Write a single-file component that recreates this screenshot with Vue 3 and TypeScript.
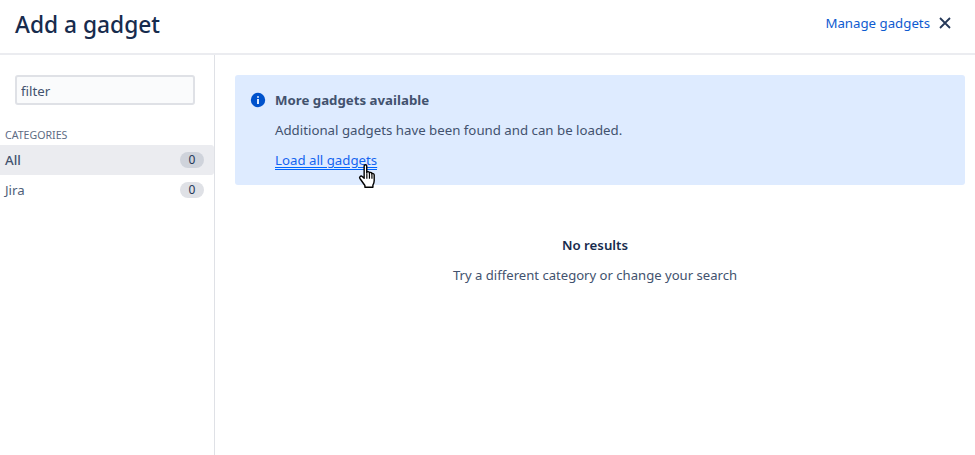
<script setup lang="ts">
const categories = [
  { name: 'All', count: 0, active: true },
  { name: 'Jira', count: 0, active: false },
]
</script>

<template>
  <div class="dialog">
    <header class="head">
      <h1 class="title">Add a gadget</h1>
      <div class="actions">
        <a class="manage">Manage gadgets</a>
        <svg class="close" width="12" height="12" viewBox="0 0 12 12" aria-label="Close">
          <path d="M1 1l10 10M11 1L1 11" stroke="#253858" stroke-width="1.8" fill="none" />
        </svg>
      </div>
    </header>
    <div class="body">
      <aside class="side">
        <div class="filter-wrap">
          <input class="filter" type="text" value="filter" />
        </div>
        <div class="cat-label">CATEGORIES</div>
        <ul class="cats">
          <li v-for="c in categories" :key="c.name" class="cat" :class="{ active: c.active }">
            <span>{{ c.name }}</span>
            <span class="badge">{{ c.count }}</span>
          </li>
        </ul>
      </aside>
      <main class="main">
        <section class="notice">
          <svg class="info" width="16" height="16" viewBox="0 0 16 16">
            <circle cx="8" cy="8" r="7.2" fill="#0052cc" />
            <rect x="7" y="7" width="2" height="5" fill="#deebff" />
            <rect x="7" y="4" width="2" height="2" rx="1" fill="#deebff" />
          </svg>
          <div class="notice-text">
            <div class="notice-title">More gadgets available</div>
            <p class="notice-desc">Additional gadgets have been found and can be loaded.</p>
            <a class="load">Load all gadgets</a>
          </div>
          <svg class="hand" width="19" height="24" viewBox="0.8 0.4 15.6 22.2">
            <path d="M5.5 2.2c0-1.5 2.4-1.5 2.4 0v6.2c.3-1.4 2.4-1.3 2.4.2v.4c.3-1.2 2.3-1.1 2.3.3v.6c.4-1 2.2-.8 2.2.6v5.2c0 2-.6 3-1.2 4.2v2H6.2v-1.6L1.6 13.8c-1-1.5.8-3 2.1-1.9l1.8 1.7z" fill="#fff" stroke="#000" stroke-width="1.3" stroke-linejoin="round" />
            <path d="M8 9v5M10.4 9.5V14M12.7 10.3V14" stroke="#000" stroke-width="1.1" fill="none" />
          </svg>
        </section>
        <div class="empty">
          <div class="empty-title">No results</div>
          <p class="empty-desc">Try a different category or change your search</p>
        </div>
      </main>
    </div>
  </div>
</template>

<style scoped>
.dialog {
  width: 975px;
  height: 455px;
  display: flex;
  flex-direction: column;
  overflow: hidden;
  background: #fff;
  font-family: "Noto Sans", "Open Sans", sans-serif;
  font-size: 13.25px;
  color: #42526e;
}
.head {
  height: 53px;
  flex: none;
  border-bottom: 2px solid #ebecf0;
  display: flex;
  align-items: center;
  justify-content: space-between;
  padding: 0 24px 0 15px;
}
.title {
  margin: 0 0 3px;
  font-size: 22.75px;
  font-weight: 500;
  color: #172b4d;
  line-height: 32px;
}
.actions {
  display: flex;
  align-items: center;
  gap: 9px;
  margin-bottom: 7px;
}
.manage {
  color: #0f5bd0;
}
.body {
  flex: 1;
  display: flex;
  min-height: 0;
}
.side {
  width: 215px;
  flex: none;
  box-sizing: border-box;
  border-right: 1px solid #dfe1e6;
  padding-top: 20px;
}
.filter-wrap {
  padding-left: 15px;
}
.filter {
  display: block;
  width: 180px;
  height: 30px;
  box-sizing: border-box;
  border: 2px solid #dfe1e6;
  border-radius: 3px;
  background: #fafbfc;
  padding: 1px 4px 0;
  font: inherit;
  color: #42526e;
  outline: none;
}
.cat-label {
  margin-top: 22px;
  padding-left: 5px;
  font-size: 10.6px;
  line-height: 16px;
  color: #5e6c84;
}
.cats {
  list-style: none;
  margin: 2px 0 0;
  padding: 0;
}
.cat {
  height: 30px;
  display: flex;
  align-items: center;
  justify-content: space-between;
  padding: 0 10px 0 5px;
  color: #505f79;
}
.cat.active {
  background: #ebecf0;
  border-radius: 0 3px 3px 0;
  color: #42526e;
  font-weight: 500;
}
.badge {
  width: 24px;
  height: 16px;
  border-radius: 8px;
  background: #dfe1e6;
  color: #253858;
  font-size: 12px;
  font-weight: 400;
  line-height: 16px;
  text-align: center;
}
.active .badge {
  background: #cfd3db;
}
.main {
  flex: 1;
  padding: 20px 10px 0 20px;
  min-width: 0;
}
.notice {
  position: relative;
  height: 110px;
  box-sizing: border-box;
  background: #deebff;
  border-radius: 3px;
  padding: 15px 16px;
  display: flex;
  gap: 9px;
}
.info {
  flex: none;
  margin: 2px 0 0 -1px;
}
.notice-title {
  font-weight: 700;
  line-height: 20px;
  color: #42526e;
}
.notice-desc {
  margin: 10px 0 0;
  line-height: 20px;
  color: #42526e;
}
.load {
  display: inline-block;
  margin-top: 11px;
  line-height: 18px;
  color: #1464f0;
  text-decoration: underline #0065ff;
  text-underline-offset: 2px;
  border-bottom: 1px solid #0065ff;
}
.hand {
  position: absolute;
  left: 123px;
  top: 89px;
}
.empty {
  margin-top: 50px;
  padding-right: 10px;
  text-align: center;
}
.empty-title {
  font-weight: 600;
  line-height: 20px;
  color: #172b4d;
}
.empty-desc {
  margin: 10px 0 0;
  font-size: 13.1px;
  line-height: 20px;
  color: #42526e;
}
</style>
